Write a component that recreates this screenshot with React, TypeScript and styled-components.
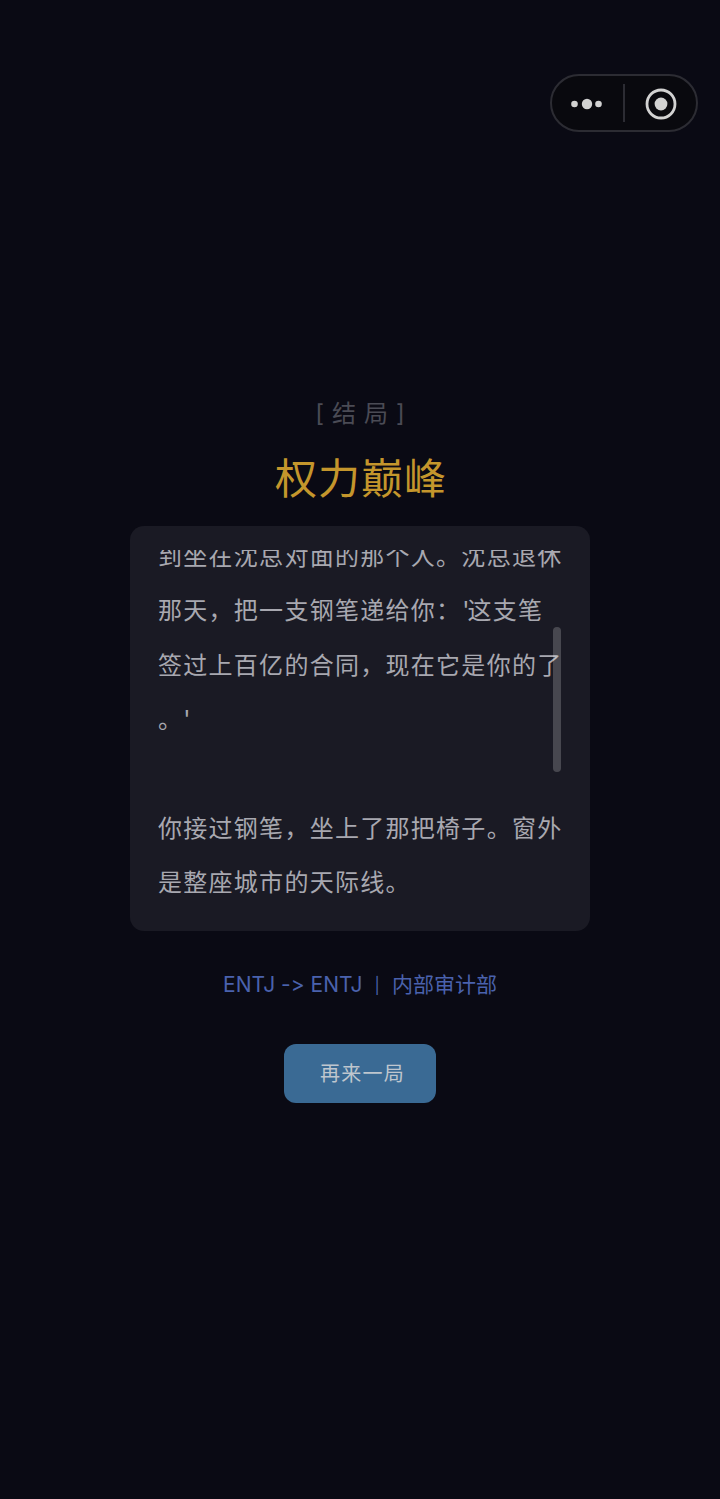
import React from "react";
import styled, { createGlobalStyle } from "styled-components";

const FONT_STACK = `Inter, "Noto Sans CJK SC", "Noto Sans", sans-serif`;

const GlobalStyle = createGlobalStyle`
  html, body { margin: 0; padding: 0; background: #0a0a14; }
  #root { min-height: 100vh; }
`;

const Page = styled.main`
  position: relative;
  box-sizing: border-box;
  width: 720px;
  height: 1499px;
  padding-top: 397px;
  display: flex;
  flex-direction: column;
  align-items: center;
  background: #0a0a14;
  font-family: ${FONT_STACK};
  font-feature-settings: "calt" 0, "liga" 0;
`;

const Capsule = styled.div`
  position: absolute;
  top: 74px;
  right: 22px;
  box-sizing: border-box;
  width: 148px;
  height: 58px;
  border: 2px solid #2c2c33;
  border-radius: 29px;
  background: #09090e;
  display: flex;
  align-items: center;
`;

const CapsuleSlot = styled.div`
  flex: 1;
  display: flex;
  align-items: center;
  justify-content: center;
`;

const CapsuleDivider = styled.div`
  width: 2px;
  height: 38px;
  background: #2c2c33;
`;

const Eyebrow = styled.div`
  font-size: 24px;
  line-height: 34px;
  letter-spacing: 8px;
  padding-left: 8px;
  color: #4a4b55;
`;

const Title = styled.h1`
  margin: 18px 0 0;
  padding-left: 2px;
  font-size: 42px;
  line-height: 60px;
  font-weight: 400;
  letter-spacing: 1px;
  color: #c4962c;
`;

const StoryCard = styled.section`
  position: relative;
  box-sizing: border-box;
  width: 460px;
  height: 405px;
  margin-top: 17px;
  padding: 24px 28px;
  border-radius: 14px;
  background: #1a1a24;
`;

const StoryScroller = styled.div`
  height: 357px;
  overflow: hidden;
`;

const StoryText = styled.div`
  margin-top: -20px;
  font-size: 24px;
  line-height: 54.4px;
  letter-spacing: 1.28px;
  color: #a8a8b0;
  white-space: nowrap;
`;

const StoryLine = styled.div`
  height: 54.4px;
`;

/* The straight quote sits tight against the character after it */
const TightQuote = styled.span`
  margin-left: 1px;
  letter-spacing: -2px;
`;

/* Translucent so the last glyph of a long line still shows through it */
const ScrollThumb = styled.div`
  position: absolute;
  top: 101px;
  right: 29px;
  width: 8px;
  height: 145px;
  border-radius: 4px;
  background: rgba(255, 255, 255, 0.2);
`;

const Meta = styled.div`
  margin-top: 38px;
  height: 32px;
  font-size: 21px;
  line-height: 32px;
  color: #4a62ad;
  display: flex;
  align-items: center;
  gap: 12px;
`;

const MetaBar = styled.span`
  font-size: 16px;
  line-height: 32px;
`;

const ReplayButton = styled.button`
  box-sizing: border-box;
  width: 152px;
  height: 59px;
  margin-top: 43px;
  padding: 0 0 2px 5px;
  border: 0;
  border-radius: 12px;
  background: #3a6a94;
  color: #bfc6ce;
  font-family: inherit;
  font-size: 20px;
  letter-spacing: 1.2px;
`;

const MoreIcon = () => (
  <svg width="34" height="15" viewBox="0 0 34 15" aria-hidden="true">
    <circle cx="3.5" cy="8" r="3.3" fill="#d2d2d2" />
    <circle cx="16" cy="8" r="5.2" fill="#d2d2d2" />
    <circle cx="27.5" cy="8" r="3.3" fill="#d2d2d2" />
  </svg>
);

const CloseIcon = () => (
  <svg width="32" height="33" viewBox="0 0 32 33" aria-hidden="true">
    <circle cx="16" cy="17" r="14" fill="none" stroke="#d2d2d2" strokeWidth="2.8" />
    <circle cx="16" cy="17" r="6.4" fill="#d2d2d2" />
  </svg>
);

const storyLines: React.ReactNode[] = [
  "到坐在沈总对面的那个人。沈总退休",
  <>
    那天，把一支钢笔递给你：<TightQuote>'</TightQuote>这支笔
  </>,
  "签过上百亿的合同，现在它是你的了",
  "。'",
  "",
  "你接过钢笔，坐上了那把椅子。窗外",
  "是整座城市的天际线。",
];

export default function App() {
  return (
    <Page>
      <GlobalStyle />
      <Capsule>
        <CapsuleSlot>
          <MoreIcon />
        </CapsuleSlot>
        <CapsuleDivider />
        <CapsuleSlot>
          <CloseIcon />
        </CapsuleSlot>
      </Capsule>

      <Eyebrow>[结局]</Eyebrow>
      <Title>权力巅峰</Title>

      <StoryCard>
        <StoryScroller>
          <StoryText>
            {storyLines.map((line, index) => (
              <StoryLine key={index}>{line}</StoryLine>
            ))}
          </StoryText>
        </StoryScroller>
        <ScrollThumb />
      </StoryCard>

      <Meta>
        <span>ENTJ -&gt; ENTJ</span>
        <MetaBar>|</MetaBar>
        <span>内部审计部</span>
      </Meta>

      <ReplayButton type="button">再来一局</ReplayButton>
    </Page>
  );
}
